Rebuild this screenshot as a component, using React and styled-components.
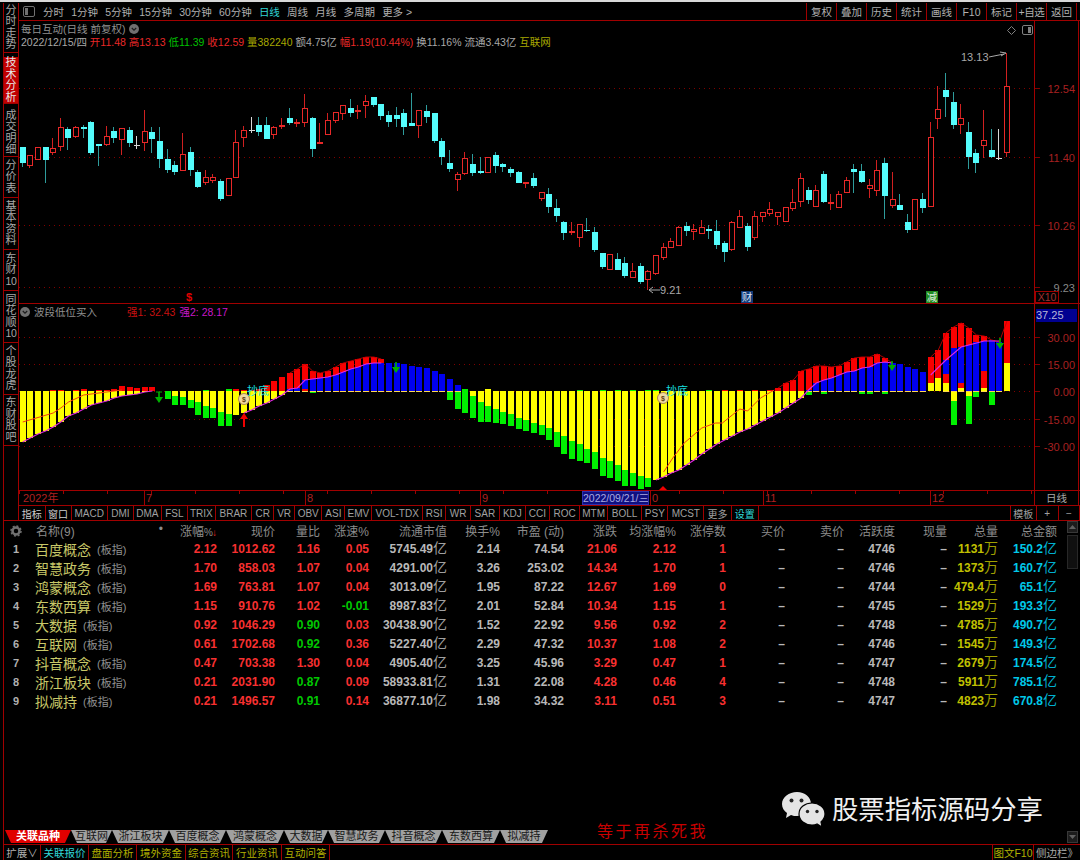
import React from "react";
import styled, { createGlobalStyle } from "styled-components";

const LINE = "#a00000";
const SANS = `"Liberation Sans", "Noto Sans CJK SC", sans-serif`;

const GlobalStyle = createGlobalStyle`
  html, body { margin: 0; background: #000; }
  body { font-family: ${SANS}; color: #b0b0b0; }
  * { box-sizing: border-box; }
`;

const Page = styled.div`
  width: 1080px;
  height: 860px;
  display: flex;
  flex-direction: column;
  background: #000;
  overflow: hidden;
  padding-top: 1px;
  border-top: 2px solid #d8d8d8;
`;

const TopArea = styled.div`
  display: flex;
  height: 518px;
  flex: none;
  margin-left: 3px;
`;

/* left vertical tabs */
const Sidebar = styled.div`
  width: 16px;
  flex: none;
  display: flex;
  flex-direction: column;
  border-left: 1px solid ${LINE};
  border-right: 1px solid ${LINE};
  border-bottom: 1px solid ${LINE};
`;

const SideTab = styled.div`
  height: ${(p) => p.$h}px;
  flex: none;
  display: flex;
  flex-direction: column;
  align-items: center;
  justify-content: center;
  font-size: 11px;
  line-height: 11.5px;
  color: ${(p) => (p.$active ? "#e8e8e8" : "#a8a8a8")};
  background: ${(p) => (p.$active ? "#c00000" : "transparent")};
  border-bottom: 1px solid ${LINE};
  margin-bottom: ${(p) => p.$mb || 0}px;
`;

const SideNum = styled.span`
  font-size: 10.5px;
  letter-spacing: -0.3px;
`;

const Content = styled.div`
  flex: 1;
  display: flex;
  flex-direction: column;
  min-width: 0;
`;

/* top toolbar */
const Toolbar = styled.div`
  height: 18px;
  flex: none;
  display: flex;
  align-items: center;
  border-bottom: 1px solid ${LINE};
  padding-left: 4px;
  font-size: 10.5px;
`;

const PeriodList = styled.div`
  display: flex;
  gap: 7.2px;
  margin-left: 8px;
  align-items: center;
`;

const Period = styled.span`
  color: ${(p) => (p.$active ? "#30d8d8" : "#b0b0b0")};
  white-space: nowrap;
`;

const ToolActions = styled.div`
  margin-left: auto;
  display: flex;
  height: 100%;
  margin-right: 3px;
  border-right: 1px solid ${LINE};
`;

const ToolButton = styled.div`
  width: 30px;
  border-left: 1px solid ${LINE};
  display: flex;
  align-items: center;
  justify-content: center;
  color: #b0b0b0;
  white-space: nowrap;
  letter-spacing: ${(p) => (p.$tight ? "-0.4px" : "0")};
`;

/* chart panes */
const PaneRow = styled.div`
  display: flex;
  height: ${(p) => p.$h}px;
  flex: none;
  border-bottom: 1px solid ${LINE};
`;

const Plot = styled.div`
  position: relative;
  width: 1015px;
  flex: none;
  svg {
    display: block;
    font-family: ${SANS};
  }
`;

const AxisColumn = styled.div`
  position: relative;
  width: 45px;
  flex: none;
  border-left: 1px solid ${LINE};
  border-right: 1px solid ${LINE};
  svg {
    display: block;
    font-family: ${SANS};
  }
`;

const ScaleTag = styled.div`
  position: absolute;
  left: 0;
  bottom: 0;
  width: 24px;
  height: 12px;
  border: 1px solid ${LINE};
  color: #a03030;
  font-size: 10.5px;
  line-height: 10px;
  text-align: center;
`;

const ValueTag = styled.div`
  position: absolute;
  left: 1px;
  top: 5px;
  width: 41px;
  height: 13px;
  background: #000090;
  color: #b8b8d8;
  font-size: 11px;
  line-height: 13px;
`;

const QuoteHead = styled.div`
  position: absolute;
  left: 2px;
  top: 2px;
  font-size: 10.5px;
  line-height: 12.5px;
`;

const QuoteTitle = styled.div`
  display: flex;
  align-items: center;
  gap: 4px;
  color: #909090;
`;

const QuoteLine = styled.div`
  display: flex;
  gap: 2.9px;
  white-space: nowrap;
`;

const Q = styled.span`
  color: ${(p) => p.$c || "#a8a8a8"};
`;

const IndicatorHead = styled.div`
  position: absolute;
  left: 1px;
  top: 2px;
  display: flex;
  align-items: center;
  font-size: 10.5px;
  line-height: 12px;
  color: #909090;
  white-space: nowrap;
`;

const IndicatorValue = styled.span`
  color: ${(p) => p.$c};
  margin-left: ${(p) => p.$ml}px;
`;

const ViewIcons = styled.div`
  position: absolute;
  right: 1px;
  top: 4px;
  display: flex;
  align-items: center;
  gap: 6px;
`;

/* time axis */
const TimeRow = styled.div`
  display: flex;
  height: 15px;
  flex: none;
  border-bottom: 1px solid ${LINE};
  position: relative;
  background: repeating-linear-gradient(90deg, ${LINE} 0 1px, transparent 1px 44px) 0 0 / 1015px 3px no-repeat;
`;

const Month = styled.div`
  width: ${(p) => p.$w}px;
  flex: none;
  border-left: ${(p) => (p.$first ? "0" : `1px solid ${LINE}`)};
  color: #b02020;
  font-size: 11px;
  line-height: 14px;
  padding-left: ${(p) => (p.$first ? 4 : 1)}px;
`;

const DateTag = styled.div`
  position: absolute;
  left: 563px;
  top: 0;
  width: 67px;
  height: 14px;
  background: #101080;
  border: 1px solid #3030b0;
  color: #a8a8e0;
  font-size: 10.5px;
  line-height: 12px;
  white-space: nowrap;
  overflow: hidden;
`;

const TimeEnd = styled.div`
  width: 45px;
  flex: none;
  border-left: 1px solid ${LINE};
  border-right: 1px solid ${LINE};
  text-align: center;
  font-size: 10.5px;
  line-height: 14px;
  color: #a8a8a8;
`;

/* indicator tab row */
const IndexTabs = styled.div`
  display: flex;
  height: 15px;
  flex: none;
  border-bottom: 1px solid ${LINE};
`;

const IndexTab = styled.div`
  width: ${(p) => p.$w}px;
  flex: none;
  border-right: 1px solid ${LINE};
  display: flex;
  align-items: center;
  justify-content: center;
  font-size: 10px;
  color: ${(p) => p.$c || "#a0a0a0"};
  white-space: nowrap;
`;

const IndexSpacer = styled.div`
  flex: 1;
  border-right: 1px solid ${LINE};
`;

/* quote table */
const LowerArea = styled.div`
  flex: 1;
  display: flex;
  margin-left: 3px;
  border-left: 1px solid ${LINE};
  position: relative;
  min-height: 0;
`;

const LowerMain = styled.div`
  width: 1063px;
  flex: none;
  display: flex;
  flex-direction: column;
  justify-content: space-between;
`;

const Rows = styled.div`
  display: flex;
  flex-direction: column;
`;

const GRID = "24px 142px 47px 58px 45px 49px 78px 53px 64px 53px 59px 50px 59px 59px 51px 52px 51px 59px";

const HeadRow = styled.div`
  display: grid;
  grid-template-columns: ${GRID};
  height: 18px;
  align-items: center;
  font-size: 12px;
  color: #8c8c8c;
  white-space: nowrap;
`;

const HeadCell = styled.div`
  text-align: right;
`;

const HeadName = styled.div`
  padding-left: 8px;
  display: flex;
  justify-content: space-between;
  padding-right: 7px;
`;

const SmallPct = styled.span`
  font-size: 10px;
`;

const SortArrow = styled.span`
  color: #e02020;
  font-size: 10px;
  margin-left: -1px;
`;

const DataRow = styled.div`
  display: grid;
  grid-template-columns: ${GRID};
  height: 19px;
  align-items: center;
  font-size: 12px;
  font-weight: bold;
  white-space: nowrap;
`;

const Rank = styled.div`
  text-align: center;
  color: #b0b0b0;
  font-size: 11px;
`;

const NameCell = styled.div`
  padding-left: 7px;
  display: flex;
  align-items: center;
  gap: 6px;
  font-weight: normal;
`;

const Name = styled.span`
  font-size: 14px;
  color: #c8c868;
`;

const NameTag = styled.span`
  font-size: 11px;
  color: #909090;
`;

const Cell = styled.div`
  text-align: right;
  color: ${(p) => p.$c || "#b8b8b8"};
`;

const Unit = styled.span`
  font-size: 14px;
  font-weight: normal;
  color: ${(p) => p.$c};
  line-height: 12px;
`;

/* related sector tabs */
const SectorTabs = styled.div`
  display: flex;
  height: 13px;
  margin-left: 1px;
  margin-bottom: 1px;
`;

const SectorTab = styled.div`
  width: ${(p) => p.$w}px;
  flex: none;
  clip-path: polygon(0 0, 100% 0, calc(100% - 6px) 100%, 6px 100%);
  background: ${(p) => (p.$active ? "#e00000" : "#a0a0a0")};
  color: ${(p) => (p.$active ? "#fff" : "#181818")};
  font-weight: ${(p) => (p.$active ? "bold" : "normal")};
  font-size: 11px;
  line-height: 13px;
  text-align: center;
  white-space: nowrap;
`;

const ScrollRail = styled.div`
  width: 12px;
  flex: none;
  display: flex;
  flex-direction: column;
  justify-content: space-between;
  padding-bottom: 1px;
`;

const ScrollTop = styled.div`
  display: flex;
  flex-direction: column;
  gap: 2px;
`;

const ScrollButton = styled.div`
  width: 11px;
  height: 12px;
  background: #1c1c1c;
  border: 1px solid #383838;
  display: flex;
  align-items: center;
  justify-content: center;
`;

const ScrollThumb = styled.div`
  width: 11px;
  height: 34px;
  background: #101010;
  border: 1px solid #282828;
`;

const Watermark = styled.div`
  position: absolute;
  right: 37px;
  bottom: 16px;
  display: flex;
  align-items: center;
  gap: 7px;
  color: #f0f0f0;
  font-size: 26.4px;
  line-height: 32px;
  white-space: nowrap;
`;

const Sign = styled.div`
  position: absolute;
  left: 593px;
  bottom: 3px;
  color: #c80000;
  font-family: "Liberation Serif", "Noto Sans CJK SC", serif;
  font-size: 16px;
  letter-spacing: 2.5px;
  line-height: 18px;
  white-space: nowrap;
`;

/* bottom bar */
const Footer = styled.div`
  height: 16px;
  flex: none;
  margin-left: 3px;
  border-top: 1px solid ${LINE};
  display: flex;
  font-size: 10.5px;
`;

const FooterItem = styled.div`
  width: ${(p) => p.$w}px;
  flex: none;
  border-left: ${(p) => (p.$first ? "1px" : "0")} solid ${LINE};
  border-right: 1px solid ${LINE};
  color: ${(p) => p.$c};
  display: flex;
  align-items: center;
  justify-content: center;
  white-space: nowrap;
`;

const FooterRight = styled.div`
  margin-left: auto;
  display: flex;
`;

const FooterSide = styled.div`
  width: 46px;
  display: flex;
  align-items: center;
  justify-content: center;
  color: #a8a8a8;
  white-space: nowrap;
`;

/* data: candle = [kind, body top, body bottom, high, low] in page pixels */
const candles = [
  ["d",147,163,147,167],["u",155,165,155,168],["u",147,159,147,160],["d",147,160,147,183],["u",148,152,138,155],
  ["u",127,146,118,151],["d",129,138,127,150],["u",127,136,126,138],["d",127,129,125,138],["d",122,153,121,155],
  ["d",144,146,144,166],["u",136,144,126,146],["d",131,138,127,143],["u",128,139,128,155],["d",130,143,127,147],
  ["w",145,145,136,149],["u",131,142,110,151],["d",132,139,127,153],["d",141,159,127,168],["d",159,170,149,173],
  ["d",165,172,161,175],["u",154,170,133,170],["d",152,170,147,176],["d",172,187,170,188],["u",177,182,170,185],
  ["u",177,180,174,183],["d",181,199,179,201],["u",178,195,178,195],["u",142,177,130,178],["u",130,137,126,147],
  ["w",130,130,117,133],["d",125,132,117,136],["d",125,139,117,139],["u",127,134,126,139],["u",125,126,118,129],
  ["d",118,123,108,125],["u",122,122,119,127],["u",108,122,94,127],["d",118,149,117,157],["u",142,142,123,143],
  ["u",120,134,113,134],["u",112,120,112,123],["u",105,113,105,120],["d",108,113,99,117],["u",110,110,105,119],
  ["u",101,105,95,118],["d",97,105,97,107],["d",104,116,104,120],["d",115,122,111,127],["d",115,119,107,127],
  ["d",113,127,109,135],["d",123,126,93,126],["u",110,125,110,138],["d",111,117,105,123],["d",113,141,113,143],
  ["d",141,157,138,165],["d",163,169,150,172],["u",174,179,172,191],["u",158,173,152,175],["d",164,173,154,176],
  ["d",171,173,157,174],["u",157,172,157,172],["d",155,166,152,173],["d",164,167,163,172],["d",169,173,167,177],
  ["d",172,183,171,183],["u",182,182,182,188],["d",178,186,173,188],["u",192,198,192,201],["d",194,207,188,213],
  ["d",208,216,199,222],["d",222,233,221,240],["u",231,231,222,235],["u",224,237,224,247],["d",230,231,218,232],
  ["d",232,250,227,252],["d",253,267,253,269],["u",254,269,254,269],["d",259,270,253,270],["d",263,276,257,278],
  ["u",271,277,263,277],["d",266,282,263,284],["u",271,279,270,290],["u",255,273,255,275],["u",247,257,243,260],
  ["u",241,247,238,247],["u",227,245,226,246],["d",226,231,222,236],["u",229,231,224,240],["u",227,233,220,234],
  ["d",229,231,225,239],["d",231,245,220,249],["d",243,252,241,262],["u",222,249,221,251],["u",216,227,210,227],
  ["d",226,247,223,251],["u",216,237,211,240],["u",212,216,212,222],["u",209,213,202,216],["u",212,216,212,225],
  ["u",207,221,207,221],["u",202,208,189,211],["u",178,201,173,207],["d",190,200,187,204],["u",190,206,185,206],
  ["d",174,202,171,203],["u",202,202,194,210],["u",194,207,191,207],["u",180,192,177,192],["d",169,172,164,193],
  ["d",171,182,164,183],["u",185,188,179,198],["u",170,190,160,196],["d",163,196,158,219],["u",199,205,172,208],
  ["d",205,210,194,210],["d",222,230,214,233],["u",199,229,199,229],["d",199,208,193,213],["u",137,206,122,206],
  ["u",109,118,86,129],["d",90,97,73,117],["d",102,125,92,129],["u",118,124,104,134],["d",132,157,122,169],
  ["d",153,163,149,173],["u",140,145,110,158],["d",150,157,129,158],["w",158,158,129,160],["u",86,152,53,157],
];

/* indicator bars: up / down stacks, cumulative px from the zero line */
const bars = [
  ["","y51"],["","y47"],["","y43"],["","y40"],["r1","y36"],["r1","y31"],["","y25"],["r1","y22"],["r2","y18"],["","y14"],
  ["r1","y12"],["r1","y10"],["r2","y7"],["r5","y5"],["r4","y4"],["r3","y3"],["r4","y1"],["r4",""],["",""],["","g8"],
  ["","y5 g14"],["","y6 g14"],["","y9 g17"],["","y11 g24"],["g1","y15 g27"],["","y17 g27"],["","y21 g35"],["g2","y23 g35"],["r2","y24"],["r1","y22"],
  ["r1","y19"],["r2","y15"],["r6","y12"],["r10","y8"],["r14","y4"],["b2 r18",""],["b3 r22",""],["r2 b11 r27",""],["b12 r20","g2"],["b13 r18",""],
  ["b14 r20",""],["b16 r24",""],["b19 r28",""],["b22 r30",""],["b24 r32",""],["b27 r34",""],["b28 r34",""],["b28 r32",""],["b28",""],["b28",""],
  ["b27",""],["b25",""],["b24",""],["b23",""],["b20",""],["b17","g1"],["b12","g9"],["b6","g18"],["g2","g22"],["","y5 g27"],
  ["","y11 g31"],["y2","y15 g31"],["","y18 g32"],["","y21 g33"],["","y23 g35"],["","y27 g38"],["","y29 g40"],["","y32 g42"],["","y34 g44"],["","y37 g49"],
  ["","y41 g56"],["","y45 g63"],["","y50 g68"],["g1","y53 g70"],["","y58 g72"],["","y61 g78"],["g1","y67 g85"],["","y70 g87"],["g1","y74 g90"],["","y79 g95"],
  ["g1","y82 g95"],["","y85 g98"],["g1","y87 g96"],["g1","y89"],["","y86"],["","y82"],["","y79"],["","y74"],["","y69"],["","y63"],
  ["g1","y58"],["","y53"],["r1","y49"],["","y45"],["r1","y41"],["","y38"],["r1","y34"],["","y30"],["r1","y26"],["r3","y22"],
  ["r8","y17"],["r11","y12"],["r20","y7"],["b1 r22","g4"],["b8 r25",""],["b11 r25","g3"],["b13 r24",""],["b16 r25",""],["b19 r29",""],["b20 r33",""],
  ["b23 r34","g3"],["b24 r34","g3"],["b28 r37",""],["b29 r33","g3"],["b28",""],["b27","g1"],["b24","g1"],["b22",""],["b19",""],["y8 r34",""],
  ["y13 r41",""],["y8 r17 b31 r58",""],["b43 r64","y10 g34"],["y3 r8 b44 r68",""],["b46 r63","y5 g33"],["b49 r56","y1 g6"],["y3 r20 b50 r55",""],["b51","g14"],["b49",""],["y28 r70",""],
];

const BAR_COLOR = { y: "#ffff00", g: "#00f000", r: "#f80000", b: "#0000f0" };
const barX = (i) => 22.7 + 7.63 * i;
const ZERO = 391;

const parseStack = (s) =>
  s ? s.split(" ").map((t) => ({ c: t[0], v: Number(t.slice(1)) })) : [];

const path = (pts) => pts.map(([i, v]) => `${barX(i).toFixed(1)},${(ZERO - v).toFixed(1)}`).join(" ");

const range = (a, b, fn) => {
  const out = [];
  for (let i = a; i <= b; i++) out.push([i, fn(i)]);
  return out;
};

const heightOf = (i) => {
  const up = parseStack(bars[i][0]);
  const down = parseStack(bars[i][1]);
  const blue = up.find((s) => s.c === "b");
  if (blue) return blue.v;
  const y = down.find((s) => s.c === "y");
  return y ? -y.v : 0;
};

const topOf = (i) => {
  const up = parseStack(bars[i][0]);
  return up.length ? up[up.length - 1].v : 0;
};

const magentaLines = [
  range(0, 17, heightOf),
  range(29, 47, heightOf),
  range(83, 114, heightOf),
  [[119, 16], [121, 31], [123, 44], [125, 48], [126, 50], [128, 50]],
];

const redLines = [range(35, 47, topOf), range(99, 114, topOf), range(119, 129, topOf)];

const orangeLines = [
  [[0, -31], [4, -22], [5, -17], [6, -11], [8, -4], [10, -2], [13, 1]],
  [[84, -81], [85.2, -67], [86.7, -52], [89, -37], [90.8, -32], [91.7, -32], [93, -24], [94, -18], [95, -20], [96.7, -7], [98.5, 1]],
];

const Grid = ({ ys }) =>
  ys.map((y) => (
    <line key={y} x1="19" x2="1034" y1={y + 0.5} y2={y + 0.5} stroke="#800000" strokeDasharray="1 4" />
  ));

function PriceChart() {
  return (
    <svg width="1015" height="282" viewBox="19 21 1015 282">
      <Grid ys={[88, 157, 225, 287]} />
      <g shapeRendering="crispEdges">
        {candles.map(([k, top, bot, hi, lo], i) => {
          const x = Math.round(barX(i));
          const wick = k === "d" ? "#2e9c9c" : k === "w" ? "#d8d8d8" : "#d02020";
          const body = k === "d" ? "#54fcfc" : k === "w" ? "#d8d8d8" : "#e82828";
          return (
            <g key={i}>
              <rect x={x - 1} y={hi} width="1" height={lo - hi} fill={wick} />
              {bot - top < 2 ? (
                <rect x={x - 3} y={top} width="6" height={Math.max(bot - top, 1) + (k === "u" ? 1 : 0)} fill={body} />
              ) : k === "d" ? (
                <rect x={x - 3} y={top} width="6" height={bot - top} fill={body} />
              ) : (
                <rect x={x - 2.5} y={top + 0.5} width="5" height={bot - top} fill="#000" stroke={body} />
              )}
            </g>
          );
        })}
      </g>
      <text x="961" y="61" fontSize="11" fill="#a8a8a8">13.13</text>
      <path d="M989 57 L1004 54 M1000 52 L1006 53 L1001 56" stroke="#a8a8a8" fill="none" />
      <path d="M660 290 H650 M653 287 L649 290 L653 293" stroke="#a8a8a8" fill="none" />
      <text x="660" y="294" fontSize="11" fill="#a8a8a8">9.21</text>
      <text x="189" y="301" fontSize="11" fontWeight="bold" fill="#e00000" textAnchor="middle">$</text>
      <rect x="741" y="291" width="12" height="12" fill="#123a78" />
      <text x="747" y="301" fontSize="10.5" fill="#d8e0f0" textAnchor="middle">财</text>
      <rect x="926" y="291" width="12" height="12" fill="#1f8a1f" />
      <text x="932" y="301" fontSize="10.5" fill="#e0f0e0" textAnchor="middle">减</text>
    </svg>
  );
}

const DownArrow = ({ x, y, h, cap }) => (
  <g>
    {cap && <line x1={x - 3} x2={x + 3} y1={y} y2={y} stroke="#00b000" />}
    <rect x={x - 0.8} y={y} width="1.6" height={h - 5} fill="#00b000" />
    <polygon points={`${x - 4},${y + h - 6} ${x + 4},${y + h - 6} ${x},${y + h}`} fill="#00b000" />
  </g>
);

const Bag = ({ x, y }) => (
  <g>
    <circle cx={x} cy={y} r="5.5" fill="#f0d8a0" stroke="#b08848" />
    <text x={x} y={y + 2.5} fontSize="7" fontWeight="bold" fill="#604010" textAnchor="middle">$</text>
  </g>
);

function IndicatorChart() {
  return (
    <svg width="1015" height="186" viewBox="19 304 1015 186">
      <Grid ys={[337, 364, 391, 419, 446]} />
      <g shapeRendering="crispEdges">
        {bars.map(([up, down], i) => {
          const x = Math.round(barX(i)) - 3;
          const segs = [];
          let prev = 0;
          parseStack(up).forEach((s) => {
            segs.push(<rect key={`u${s.c}${s.v}`} x={x} y={ZERO - s.v} width="6" height={s.v - prev} fill={BAR_COLOR[s.c]} />);
            prev = s.v;
          });
          prev = 0;
          parseStack(down).forEach((s) => {
            segs.push(<rect key={`d${s.c}${s.v}`} x={x} y={ZERO + prev} width="6" height={s.v - prev} fill={BAR_COLOR[s.c]} />);
            prev = s.v;
          });
          if (up.includes("b")) segs.push(<rect key="z" x={x} y={ZERO} width="6" height="1" fill="#ffd850" />);
          return <g key={i}>{segs}</g>;
        })}
      </g>
      {orangeLines.map((l, i) => (
        <polyline key={i} points={path(l)} fill="none" stroke="#f04010" strokeWidth="1" />
      ))}
      {redLines.map((l, i) => (
        <polyline key={i} points={path(l)} fill="none" stroke="#c00000" strokeWidth="0.9" />
      ))}
      {magentaLines.map((l, i) => (
        <polyline key={i} points={path(l)} fill="none" stroke="#e028e0" strokeWidth="1.1" />
      ))}
      <DownArrow x={159} y={392} h={11} cap />
      <DownArrow x={396} y={362} h={11} />
      <DownArrow x={892} y={361} h={10} />
      <DownArrow x={1000} y={338} h={11} />
      <polygon points="244,413 248,419 245,419 245,427 243,427 243,419 240,419" fill="#f00000" />
      <Bag x={244} y={399} />
      <text x="247" y="395" fontSize="11" fill="#18e0e0">抄底</text>
      <Bag x={663} y={398} />
      <text x="666" y="395" fontSize="11" fill="#18e0e0">抄底</text>
      <polygon points="663,486 667,490 659,490" fill="#f00000" />
    </svg>
  );
}

const PriceAxis = ({ ticks, top, height }) => (
  <svg width="43" height={height} viewBox={`1035 ${top} 43 ${height}`}>
    {ticks.map(([y, label, color]) => (
      <g key={label}>
        <line x1="1035" x2="1040" y1={y + 0.5} y2={y + 0.5} stroke="#800000" />
        <text x="1075" y={y + 4.5} fontSize="11" fill={color || "#a82020"} textAnchor="end">{label}</text>
      </g>
    ))}
  </svg>
);

const Chevron = () => (
  <svg width="10" height="10" viewBox="0 0 10 10">
    <circle cx="5" cy="5" r="5" fill="#707070" />
    <path d="M2.8 4 L5 6.2 L7.2 4" stroke="#1c1c1c" strokeWidth="1.2" fill="none" />
  </svg>
);

const WeChatLogo = () => (
  <svg width="43" height="36" viewBox="0 0 43 36">
    <path d="M15 0 C23 0 29 5 29 12 C29 19 23 24 15 24 C13 24 11 24 9 23 L4 26 L5 21 C2 19 0 16 0 12 C0 5 7 0 15 0 Z" fill="#e4e4e4" />
    <circle cx="9.5" cy="8.5" r="2" fill="#222" />
    <circle cx="19.5" cy="8.5" r="2" fill="#222" />
    <path d="M30 11 C37 11 43 15.5 43 22 C43 25.5 41 28 39 30 L40 35 L35 32 C33 33 32 33 30 33 C23 33 17 28.5 17 22 C17 15.5 23 11 30 11 Z" fill="#e4e4e4" stroke="#000" strokeWidth="1.2" />
    <circle cx="25.5" cy="19.5" r="1.7" fill="#222" />
    <circle cx="35" cy="19.5" r="1.7" fill="#222" />
  </svg>
);

const sideTabs = [
  { h: 50, mb: 4, lines: ["分", "时", "走", "势"] },
  { h: 47, mb: 5, active: true, lines: ["技", "术", "分", "析"] },
  { h: 48, lines: ["成", "交", "明", "细"] },
  { h: 41, lines: ["分", "价", "表"] },
  { h: 52, lines: ["基", "本", "资", "料"] },
  { h: 41, lines: ["东", "财"], num: "10" },
  { h: 52, lines: ["同", "花", "顺"], num: "10" },
  { h: 52, lines: ["个", "股", "龙", "虎"] },
  { h: 51, lines: ["东", "财", "股", "吧"] },
];

const periods = ["分时", "1分钟", "5分钟", "15分钟", "30分钟", "60分钟", "日线", "周线", "月线", "多周期", "更多 >"];
const actions = ["复权", "叠加", "历史", "统计", "画线", "F10", "标记", "+自选", "返回"];

const months = [
  ["2022年", 125], ["7", 161], ["8", 175], ["9", 170], ["0", 113], ["11", 167], ["12", 104],
];

const indexTabs = [
  ["指标", 26.5, "#d0d0d0"], ["窗口", 26, "#d0d0d0"], ["MACD", 36.4], ["DMI", 26], ["DMA", 28], ["FSL", 26], ["TRIX", 28], ["BRAR", 36],
  ["CR", 22.5], ["VR", 20.5], ["OBV", 27.6], ["ASI", 22.8], ["EMV", 27.2], ["VOL-TDX", 50.4], ["RSI", 23.6], ["WR", 24.4],
  ["SAR", 29], ["KDJ", 26], ["CCI", 24], ["ROC", 30.6], ["MTM", 27.4], ["BOLL", 34.6], ["PSY", 25.8], ["MCST", 36.2],
  ["更多", 27.2], ["设置", 27.5, "#30d8d8"],
];

const RED = "#f83030";
const GREEN = "#00c800";
const rows = [
  ["百度概念","2.12","1012.62","1.16","0.05","5745.49","2.14","74.54","21.06","2.12","1","4746","1131","150.2"],
  ["智慧政务","1.70","858.03","1.07","0.04","4291.00","3.26","253.02","14.34","1.70","1","4746","1373","160.7"],
  ["鸿蒙概念","1.69","763.81","1.07","0.04","3013.09","1.95","87.22","12.67","1.69","0","4744","479.4","65.1"],
  ["东数西算","1.15","910.76","1.02","-0.01","8987.83","2.01","52.84","10.34","1.15","1","4745","1529","193.3"],
  ["大数据","0.92","1046.29","0.90","0.03","30438.90","1.52","22.92","9.56","0.92","2","4748","4785","490.7"],
  ["互联网","0.61","1702.68","0.92","0.36","5227.40","2.29","47.32","10.37","1.08","2","4746","1545","149.3"],
  ["抖音概念","0.47","703.38","1.30","0.04","4905.40","3.25","45.96","3.29","0.47","1","4747","2679","174.5"],
  ["浙江板块","0.21","2031.90","0.87","0.09","58933.81","1.31","22.08","4.28","0.46","4","4748","5911","785.1"],
  ["拟减持","0.21","1496.57","0.91","0.14","36877.10","1.98","34.32","3.11","0.51","3","4747","4823","670.8"],
];

const heads = ["现价", "量比", "涨速%", "流通市值", "换手%", "市盈 (动)", "涨跌", "均涨幅%", "涨停数", "买价", "卖价", "活跃度", "现量", "总量", "总金额"];

const sectors = [
  ["关联品种", 66], ["互联网", 41], ["浙江板块", 57], ["百度概念", 57], ["鸿蒙概念", 58], ["大数据", 44],
  ["智慧政务", 57], ["抖音概念", 57], ["东数西算", 58], ["拟减持", 48],
];

const footerItems = [
  ["扩展∨", 38, "#b0b0b0"], ["关联报价", 48, "#30d8d8"], ["盘面分析", 48, "#b0b000"], ["境外资金", 49, "#b0b000"],
  ["综合资讯", 47, "#b0b000"], ["行业资讯", 49, "#b0b000"], ["互动问答", 48, "#b0b000"],
];

export default function App() {
  return (
    <Page>
      <GlobalStyle />
      <TopArea>
        <Sidebar>
          {sideTabs.map((t) => (
            <SideTab key={t.lines.join("") + (t.num || "")} $h={t.h} $mb={t.mb} $active={t.active}>
              {t.lines.map((c) => <span key={c}>{c}</span>)}
              {t.num && <SideNum>{t.num}</SideNum>}
            </SideTab>
          ))}
        </Sidebar>
        <Content>
          <Toolbar>
            <svg width="12" height="11" viewBox="0 0 12 11">
              <rect x="0.5" y="0.5" width="11" height="10" rx="1.5" fill="none" stroke="#707070" />
              <rect x="2" y="2" width="3" height="7" fill="#707070" />
            </svg>
            <PeriodList>
              {periods.map((p) => <Period key={p} $active={p === "日线"}>{p}</Period>)}
            </PeriodList>
            <ToolActions>
              {actions.map((a) => <ToolButton key={a} $tight={a === "+自选"}>{a}</ToolButton>)}
            </ToolActions>
          </Toolbar>

          <PaneRow $h={283}>
            <Plot>
              <PriceChart />
              <QuoteHead>
                <QuoteTitle>每日互动(日线 前复权) <Chevron /></QuoteTitle>
                <QuoteLine>
                  <Q>2022/12/15/四</Q>
                  <Q $c="#e82828">开11.48</Q>
                  <Q $c="#e82828">高13.13</Q>
                  <Q $c="#00c000">低11.39</Q>
                  <Q $c="#e82828">收12.59</Q>
                  <Q $c="#a8a800">量382240</Q>
                  <Q>额4.75亿</Q>
                  <Q $c="#e82828">幅1.19(10.44%)</Q>
                  <Q>换11.16%</Q>
                  <Q>流通3.43亿</Q>
                  <Q $c="#a8a800">互联网</Q>
                </QuoteLine>
              </QuoteHead>
              <ViewIcons>
                <svg width="9" height="9" viewBox="0 0 9 9">
                  <path d="M4.5 0.5 L8.5 4.5 L4.5 8.5 L0.5 4.5 Z" fill="none" stroke="#808080" />
                </svg>
                <svg width="11" height="10" viewBox="0 0 11 10">
                  <rect x="0.5" y="0.5" width="10" height="9" rx="1.5" fill="none" stroke="#808080" />
                  <rect x="6" y="2" width="3" height="6" fill="#808080" />
                </svg>
              </ViewIcons>
            </Plot>
            <AxisColumn>
              <PriceAxis top={21} height={282} ticks={[[88, "12.54"], [157, "11.40"], [225, "10.26"], [287, "9.23", "#888"]]} />
              <ScaleTag>X10</ScaleTag>
            </AxisColumn>
          </PaneRow>

          <PaneRow $h={187}>
            <Plot>
              <IndicatorChart />
              <IndicatorHead>
                <Chevron />
                <IndicatorValue $c="#909090" $ml={4}>波段低位买入</IndicatorValue>
                <IndicatorValue $c="#c81010" $ml={30}>强1: 32.43</IndicatorValue>
                <IndicatorValue $c="#c818c8" $ml={4}>强2: 28.17</IndicatorValue>
              </IndicatorHead>
            </Plot>
            <AxisColumn>
              <PriceAxis
                top={304}
                height={186}
                ticks={[[337, "30.00"], [364, "15.00"], [391, "0.00"], [419, "-15.00"], [446, "-30.00"]]}
              />
              <ValueTag>37.25</ValueTag>
            </AxisColumn>
          </PaneRow>

          <TimeRow>
            {months.map(([m, w], i) => <Month key={m} $w={w} $first={i === 0}>{m}</Month>)}
            <DateTag>2022/09/21/三</DateTag>
            <TimeEnd>日线</TimeEnd>
          </TimeRow>

          <IndexTabs>
            {indexTabs.map(([t, w, c]) => <IndexTab key={t} $w={w} $c={c}>{t}</IndexTab>)}
            <IndexSpacer />
            <IndexTab $w={25.5}>模板</IndexTab>
            <IndexTab $w={22.5}>+</IndexTab>
            <IndexTab $w={21}>−</IndexTab>
          </IndexTabs>
        </Content>
      </TopArea>

      <LowerArea>
        <LowerMain>
          <Rows>
            <HeadRow>
              <Rank>
                <svg width="12" height="12" viewBox="0 0 12 12" style={{ marginTop: 3 }}>
                  <circle cx="6" cy="6" r="3.5" fill="none" stroke="#707070" strokeWidth="2.5" />
                  <circle cx="6" cy="6" r="5" fill="none" stroke="#707070" strokeWidth="1.5" strokeDasharray="2 1.9" />
                </svg>
              </Rank>
              <HeadName><span>名称(9)</span><span>•</span></HeadName>
              <HeadCell>涨幅<SmallPct>%</SmallPct><SortArrow>↓</SortArrow></HeadCell>
              {heads.map((h) => <HeadCell key={h}>{h}</HeadCell>)}
            </HeadRow>
            {rows.map((r, i) => {
              const [name, pct, price, ratio, speed, cap, turn, pe, chg, avg, limit, active, vol, amount] = r;
              return (
                <DataRow key={name}>
                  <Rank>{i + 1}</Rank>
                  <NameCell><Name>{name}</Name><NameTag>(板指)</NameTag></NameCell>
                  <Cell $c={RED}>{pct}</Cell>
                  <Cell $c={RED}>{price}</Cell>
                  <Cell $c={Number(ratio) < 1 ? GREEN : RED}>{ratio}</Cell>
                  <Cell $c={Number(speed) < 0 ? GREEN : RED}>{speed}</Cell>
                  <Cell>{cap}<Unit $c="#a0a0a0">亿</Unit></Cell>
                  <Cell>{turn}</Cell>
                  <Cell>{pe}</Cell>
                  <Cell $c={RED}>{chg}</Cell>
                  <Cell $c={RED}>{avg}</Cell>
                  <Cell $c={RED}>{limit}</Cell>
                  <Cell>–</Cell>
                  <Cell>–</Cell>
                  <Cell>{active}</Cell>
                  <Cell>–</Cell>
                  <Cell $c="#c0c000">{vol}<Unit $c="#a0a000">万</Unit></Cell>
                  <Cell $c="#00c8e8">{amount}<Unit $c="#00b0d0">亿</Unit></Cell>
                </DataRow>
              );
            })}
          </Rows>
          <SectorTabs>
            {sectors.map(([s, w], i) => <SectorTab key={s} $w={w} $active={i === 0}>{s}</SectorTab>)}
          </SectorTabs>
        </LowerMain>
        <ScrollRail>
          <ScrollTop>
            <ScrollButton>
              <svg width="7" height="4" viewBox="0 0 7 4"><path d="M3.5 0 L7 4 H0 Z" fill="#606060" /></svg>
            </ScrollButton>
            <ScrollThumb />
          </ScrollTop>
          <ScrollButton>
            <svg width="7" height="4" viewBox="0 0 7 4"><path d="M0 0 H7 L3.5 4 Z" fill="#606060" /></svg>
          </ScrollButton>
        </ScrollRail>
        <Sign>等于再杀死我</Sign>
        <Watermark>
          <WeChatLogo />
          <span>股票指标源码分享</span>
        </Watermark>
      </LowerArea>

      <Footer>
        {footerItems.map(([t, w, c], i) => <FooterItem key={t} $w={w} $c={c} $first={i === 0}>{t}</FooterItem>)}
        <FooterRight>
          <FooterItem $w={42} $c="#b0b000" $first>图文F10</FooterItem>
          <FooterSide>侧边栏》</FooterSide>
        </FooterRight>
      </Footer>
    </Page>
  );
}
